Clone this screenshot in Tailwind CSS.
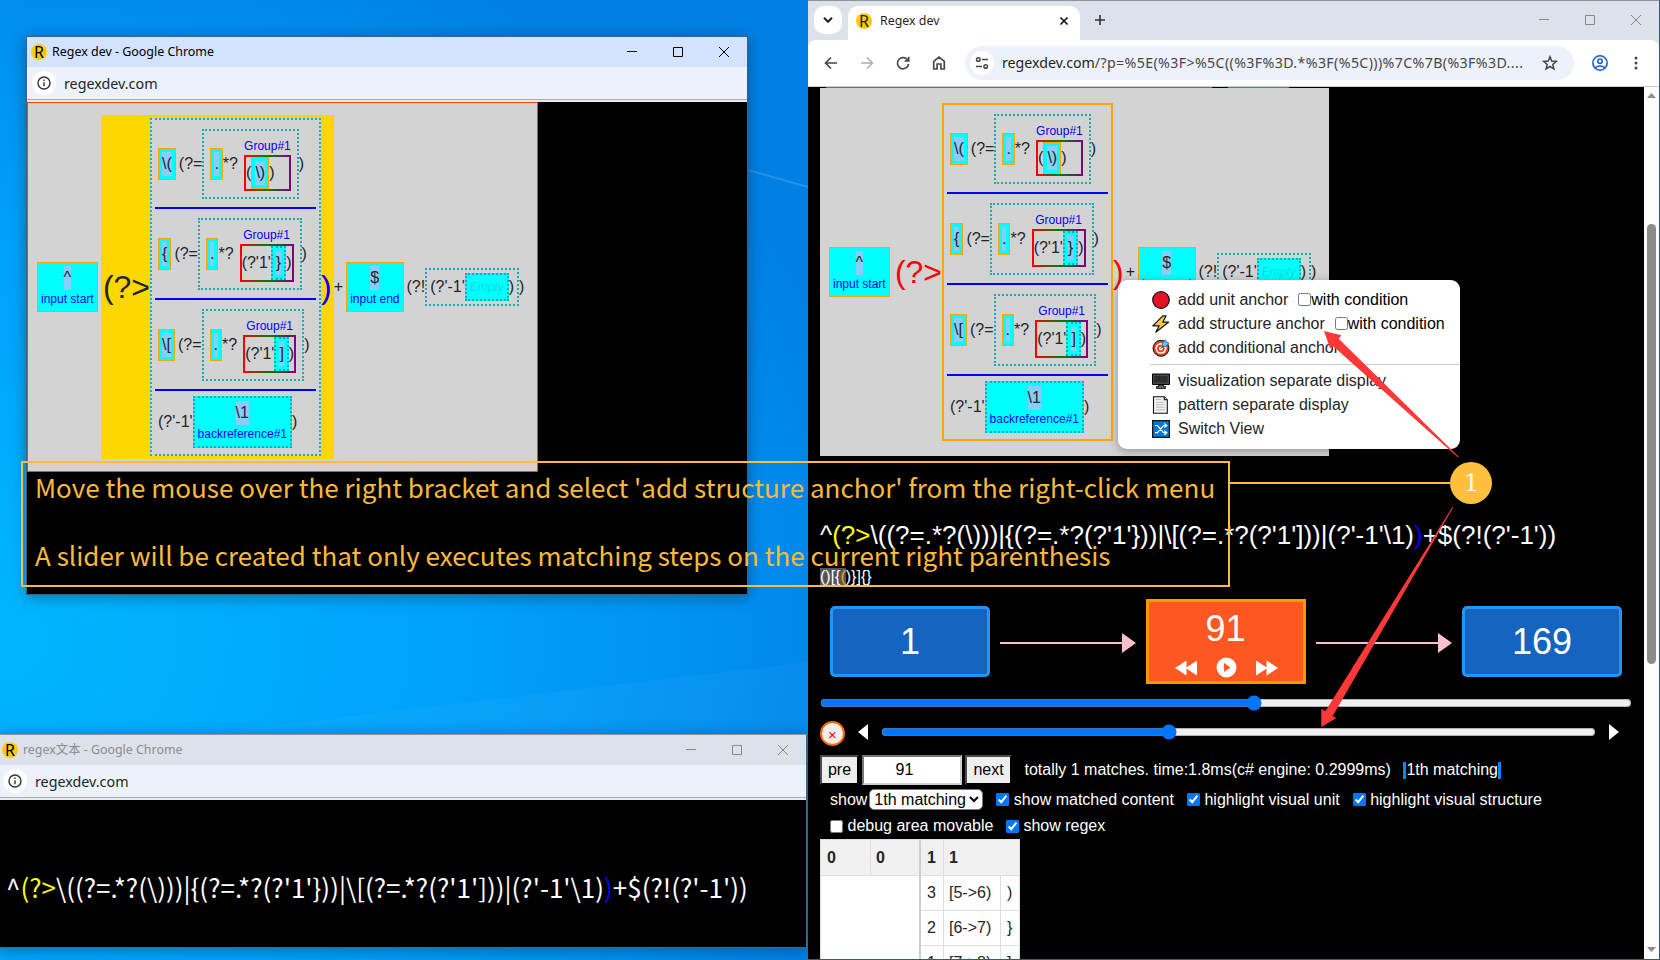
<!DOCTYPE html>
<html lang="en">

<head>
    <meta charset="UTF-8">
    <meta name="viewport" content="width=device-width, initial-scale=1.0">
    <title>Regex dev</title>
    <script src="https://cdn.jsdelivr.net/npm/@tailwindcss/browser@4"></script>
</head>

<body class="relative w-[1660px] h-[960px] overflow-hidden font-['Liberation_Sans',Arial,sans-serif] text-[16px] leading-6 text-[#212529] bg-[radial-gradient(ellipse_900px_760px_at_0px_640px,#00b6ff_0%,#00a2fb_50%,#0090f0_80%,#0080e4_100%)]">

    <!-- wallpaper beams -->
    <svg class="absolute left-0 top-0" width="808" height="960" viewBox="0 0 808 960" fill="#fff">
        <path d="M748 169l60 17v2l-60-17z" fill-opacity=".15"/>
        <path d="M200 734L808 662V734z" fill-opacity=".03"/>
    </svg>

    <!-- visualization window -->
    <div class="absolute left-[26px] top-[36px] w-[722px] h-[559px] flex flex-col border border-[#3f5f80] bg-black shadow-[0_2px_14px_rgba(0,0,0,0.35)]">
        <div class="h-[30px] shrink-0 flex items-center pl-1 bg-[#d3e3fd] text-black">
            <span class="shrink-0 w-4 h-4 rounded-full bg-[#fdcb08] text-[16px] leading-4 text-center font-['Noto_Sans',sans-serif]">R</span>
            <span class="ml-[5px] text-[12.45px] font-['Noto_Sans',sans-serif]">Regex dev - Google Chrome</span>
            <div class="ml-auto mr-[18px] flex gap-9">
                <svg width="10" height="10" viewBox="0 0 10 10" fill="none" stroke="#000"><path d="M0 4.5h10"/></svg>
                <svg width="10" height="10" viewBox="0 0 10 10" fill="none" stroke="#000"><path d="M.5.5h9v9h-9z"/></svg>
                <svg width="10" height="10" viewBox="0 0 10 10" fill="none" stroke="#000"><path d="M0 0l10 10M10 0L0 10"/></svg>
            </div>
        </div>
        <div class="h-8 shrink-0 flex items-center pl-[5px] bg-[#edf1fa]">
            <span class="w-6 h-6 rounded-full bg-white flex items-center justify-center">
                <svg width="14" height="14" viewBox="0 0 14 14" fill="none" stroke="#333" stroke-width="1.4"><circle cx="7" cy="7" r="6"/><path d="M7 6.2v4M7 3.6v1.5"/></svg>
            </span>
            <span class="ml-2 mt-[2px] text-[14.3px] font-['Noto_Sans',sans-serif]">regexdev.com</span>
        </div>
        <div class="h-[3px] shrink-0 border-t border-[#a9adb3] bg-[#e8eaf0]"></div>
        <div id="vis1" class="w-[511px] h-[370px] border border-[#ff4500] bg-[#d3d3d3] flex items-center pl-[6px]"></div>
    </div>

    <!-- pattern window -->
    <div class="absolute left-[-3px] top-[734px] w-[810px] h-[214px] flex flex-col border border-[#3c6d90] border-t-[#8b959e] bg-black shadow-[0_2px_14px_rgba(0,0,0,0.35)]">
        <div class="h-[30px] shrink-0 flex items-center pl-1 bg-[#dde1e9] text-[#8a8d92]">
            <span class="shrink-0 w-4 h-4 rounded-full bg-[#fdcb08] text-black text-[16px] leading-4 text-center font-['Noto_Sans',sans-serif]">R</span>
            <span class="ml-[5px] text-[12.4px] font-['Noto_Sans','Noto_Sans_CJK_SC',sans-serif]">regex文本 - Google Chrome</span>
            <div class="ml-auto mr-[18px] flex gap-9">
                <svg width="10" height="10" viewBox="0 0 10 10" fill="none" stroke="#888"><path d="M0 4.5h10"/></svg>
                <svg width="10" height="10" viewBox="0 0 10 10" fill="none" stroke="#888"><path d="M.5.5h9v9h-9z"/></svg>
                <svg width="10" height="10" viewBox="0 0 10 10" fill="none" stroke="#888"><path d="M0 0l10 10M10 0L0 10"/></svg>
            </div>
        </div>
        <div class="h-8 shrink-0 flex items-center pl-[5px] bg-[#edf1fa]">
            <span class="w-6 h-6 rounded-full bg-white flex items-center justify-center">
                <svg width="14" height="14" viewBox="0 0 14 14" fill="none" stroke="#333" stroke-width="1.4"><circle cx="7" cy="7" r="6"/><path d="M7 6.2v4M7 3.6v1.5"/></svg>
            </span>
            <span class="ml-2 mt-[2px] text-[14.3px] font-['Noto_Sans',sans-serif]">regexdev.com</span>
        </div>
        <div class="h-[3px] shrink-0 border-t border-[#a9adb3] bg-[#e8eaf0]"></div>
        <div class="pt-[67px] pl-[8px] text-[26px] leading-[40px] text-white whitespace-nowrap font-['Noto_Sans_CJK_SC',sans-serif]">^<span class="text-[#ff0]">(?&gt;</span>\((?=.*?(\)))|{(?=.*?(?'1'}))|\[(?=.*?(?'1']))|(?'-1'\1)<span class="text-[#00f]">)</span>+$(?!(?'-1'))</div>
    </div>

    <!-- main browser window -->
    <div class="absolute left-[808px] top-0 w-[852px] h-[960px] flex flex-col border border-l-0 border-[#2f5b8e] border-t-[#8f939a] bg-black">
        <div class="h-[39px] shrink-0 flex items-start pl-[6px] pt-[5px] bg-[#dde1e9]">
            <span class="w-7 h-7 rounded-[10px] bg-white flex items-center justify-center">
                <svg width="10" height="6" viewBox="0 0 10 6" fill="none" stroke="#1f1f1f" stroke-width="2"><path d="M1 .8l4 4 4-4"/></svg>
            </span>
            <div class="ml-[6px] w-[232px] h-[34px] rounded-t-[10px] bg-white flex items-center pl-2 pb-[5px] text-[#1f1f1f]">
                <span class="shrink-0 w-4 h-4 rounded-full bg-[#fdcb08] text-[16px] leading-4 text-center font-['Noto_Sans',sans-serif]">R</span>
                <span class="ml-2 text-[12.4px] font-['Noto_Sans',sans-serif]">Regex dev</span>
                <svg class="ml-auto mr-3" width="8" height="8" viewBox="0 0 8 8" fill="none" stroke="#1f1f1f" stroke-width="1.6"><path d="M.5.5l7 7M7.500.5l-7 7"/></svg>
            </div>
            <svg class="ml-[15px] mt-[9px]" width="10" height="10" viewBox="0 0 10 10" fill="none" stroke="#333" stroke-width="1.6"><path d="M0 5h10M5 0v10"/></svg>
            <div class="ml-auto mr-[18px] mt-[9px] flex gap-9">
                <svg width="10" height="10" viewBox="0 0 10 10" fill="none" stroke="#888"><path d="M0 4.5h10"/></svg>
                <svg width="10" height="10" viewBox="0 0 10 10" fill="none" stroke="#888"><path d="M.5.5h9v9h-9z"/></svg>
                <svg width="10" height="10" viewBox="0 0 10 10" fill="none" stroke="#888"><path d="M0 0l10 10M10 0L0 10"/></svg>
            </div>
        </div>
        <div class="h-[46px] shrink-0 bg-[#dde1e9]">
            <div class="h-full flex items-center pl-[15px] rounded-t-[8px] bg-white text-[#474747]">
                <svg width="16" height="16" viewBox="0 0 16 16" fill="none" stroke="#474747" stroke-width="1.7"><path d="M14 8H3M8 2.500L2.500 8 8 13.500"/></svg>
                <svg class="ml-5" width="16" height="16" viewBox="0 0 16 16" fill="none" stroke="#b0b0b0" stroke-width="1.7"><path d="M2 8h11M8 2.500L13.500 8 8 13.500"/></svg>
                <svg class="ml-5" width="16" height="16" viewBox="0 0 16 16" fill="none" stroke="#474747" stroke-width="1.7"><path d="M13 5.500A5.600 5.600 0 1 0 13.600 9M13.700 1.800V6H9.500"/></svg>
                <svg class="ml-5" width="16" height="16" viewBox="0 0 16 16" fill="none" stroke="#474747" stroke-width="1.7"><path d="M2.700 6.300L8 2l5.300 4.300V14H9.900V9H6.100v5H2.700z"/></svg>
                <div class="ml-[18px] w-[609px] h-[34px] rounded-full bg-[#edf1fa] flex items-center pl-[5px]">
                    <span class="w-6 h-6 rounded-full bg-white flex items-center justify-center">
                        <svg width="14" height="14" viewBox="0 0 14 14" fill="none" stroke="#474747" stroke-width="1.5"><circle cx="3.300" cy="3.500" r="1.800"/><path d="M7 3.500h6M1 10.500h6"/><circle cx="10.700" cy="10.500" r="1.800"/></svg>
                    </span>
                    <span class="ml-2 mb-px text-[14.2px] whitespace-nowrap font-['Noto_Sans',sans-serif]"><span class="text-[#1f1f1f]">regexdev.com</span><span class="tracking-[0.37px]">/?p=%5E(%3F&gt;%5C((%3F%3D.*%3F(%5C)))%7C%7B(%3F%3D....</span></span>
                    <svg class="ml-auto mr-4" width="16" height="16" viewBox="0 0 16 16" fill="none" stroke="#474747" stroke-width="1.500"><path d="M8 1.800l1.700 4.300 4.600.3-3.500 3 1.100 4.500L8 11.500l-3.900 2.400 1.100-4.500-3.500-3 4.600-.3z"/></svg>
                </div>
                <svg class="ml-[18px]" width="16" height="16" viewBox="0 0 16 16" fill="none" stroke="#1558d0" stroke-width="1.500"><circle cx="8" cy="8" r="7.200"/><circle cx="8" cy="6.300" r="2.200"/><path d="M3.200 12.700c2.700-2.400 6.900-2.400 9.600 0"/></svg>
                <svg class="ml-5" width="16" height="16" viewBox="0 0 16 16" fill="#474747"><circle cx="8" cy="3" r="1.500"/><circle cx="8" cy="8" r="1.500"/><circle cx="8" cy="13" r="1.500"/></svg>
            </div>
        </div>
        <div class="h-px shrink-0 bg-[#c9cbd0]"></div>

        <div class="flex-1 min-h-0 flex">
            <div class="w-[836px] overflow-hidden pl-[12px] text-white">
                <div class="h-px flex"><div class="ml-[6px] w-[386px] bg-[#6f6f6f]"></div><div class="ml-4 w-[61px] bg-[#3d7fd0]"></div></div>
                <div id="vis2" class="w-[509px] h-[368px] bg-[#d3d3d3] text-[#212529] flex items-center pl-[6px]"></div>

                <div class="mt-[60px] text-[26px] leading-[39px] whitespace-nowrap">^<span class="text-[#ff0]">(?&gt;</span>\((?=.*?(\)))|{(?=.*?(?'1'}))|\[(?=.*?(?'1']))|(?'-1'\1)<span class="text-[#00f]">)</span>+$(?!(?'-1'))</div>
                <div class="mt-[10px]"><span class="bg-[#555]">()[{<span class="text-[#ffa500]">(</span></span>)}]{}</div>

                <!-- step boxes -->
                <div class="mt-[10px] h-[85px] pl-[10px] flex items-center">
                    <div class="w-[160px] h-[71px] border-[3px] border-[#2196f3] rounded-[5px] bg-[#1565c0] flex items-center justify-center text-[36px]">1</div>
                    <svg class="mx-[10px] mt-[3px]" width="136" height="20" viewBox="0 0 136 20" fill="#ffc0cb"><path d="M0 9h123v2H0zM122 0l14 10-14 10z"/></svg>
                    <div class="w-[160px] h-[85px] border-[3px] border-[#ff9800] bg-[#ff5722] flex flex-col items-center text-[36px]">
                        <div class="mt-[2px] mr-px leading-[50px]">91</div>
                        <div class="mt-[3px] flex items-center">
                            <svg width="22" height="16" viewBox="0 0 22 16" fill="#fff"><path d="M11.500.5v15L0 8zM22 .5v15L10.500 8z"/></svg>
                            <svg class="mx-[19px]" width="21" height="21" viewBox="0 0 21 21"><circle cx="10.500" cy="10.500" r="10" fill="#fff"/><path d="M8 6l6.500 4.500L8 15z" fill="#ff5722"/></svg>
                            <svg width="22" height="16" viewBox="0 0 22 16" fill="#fff"><path d="M0 .5v15L11.500 8zM10.500.5v15L22 8z"/></svg>
                        </div>
                    </div>
                    <svg class="mx-[10px] mt-[3px]" width="136" height="20" viewBox="0 0 136 20" fill="#ffc0cb"><path d="M0 9h123v2H0zM122 0l14 10-14 10z"/></svg>
                    <div class="w-[160px] h-[71px] border-[3px] border-[#2196f3] rounded-[5px] bg-[#1565c0] flex items-center justify-center text-[36px]">169</div>
                </div>

                <input type="range" min="1" max="169" value="91" class="block mt-[11px] w-[812px] h-4">
                <div class="mt-[10px] h-[25px] flex items-center">
                    <button class="w-[25px] h-[25px] rounded-full border-2 border-[#ff6a00] bg-[#efefef] text-[#f00] text-[15px] leading-[22px] pt-px text-center">×</button>
                    <svg class="ml-[13px] mb-[3px]" width="10" height="16" viewBox="0 0 10 16" fill="#fff"><path d="M10 0v16L0 8z"/></svg>
                    <input type="range" min="0" max="100" value="40" class="ml-[13px] mb-[3px] w-[715px] h-4">
                    <svg class="ml-[13px] mb-[3px]" width="10" height="16" viewBox="0 0 10 16" fill="#fff"><path d="M0 0v16l10-8z"/></svg>
                </div>

                <div class="mt-[9px] h-[30px] flex items-center">
                    <button class="w-[39px] h-[30px] border-2 border-black border-t-[#4c4c4c] border-l-[#4c4c4c] bg-[#efefef] text-black">pre</button>
                    <div class="ml-[3px] w-[100px] h-[30px] border-2 border-[#767676] border-b-[#cfcfcf] border-r-[#cfcfcf] bg-white text-black text-center leading-[26px] pr-[15px]">91</div>
                    <button class="ml-[3px] w-[47px] h-[30px] border-2 border-black border-t-[#4c4c4c] border-l-[#4c4c4c] bg-[#efefef] text-black">next</button>
                    <span class="ml-[12.5px]">totally 1 matches. time:1.8ms(c# engine: 0.2999ms)</span>
                    <span class="ml-[12.5px] h-[17px] leading-[16px] border-x-[3px] border-[#0a84ff]">1th matching</span>
                </div>
                <div class="mt-[4px] h-[21px] pl-[10px] flex items-center">
                    <span>show</span>
                    <select class="ml-[2px] w-[114px] h-[21px] rounded-[5px] border border-[#767676] bg-white text-black px-0 py-0"><option>1th matching</option></select>
                    <input type="checkbox" checked class="ml-[13px] w-[13px] h-[13px]"><span class="ml-[4.5px]">show matched content</span>
                    <input type="checkbox" checked class="ml-[13px] w-[13px] h-[13px]"><span class="ml-[4.5px]">highlight visual unit</span>
                    <input type="checkbox" checked class="ml-[13px] w-[13px] h-[13px]"><span class="ml-[4.5px]">highlight visual structure</span>
                </div>
                <div class="mt-[4px] h-[24px] pl-[10px] flex items-center">
                    <input type="checkbox" class="w-[13px] h-[13px]"><span class="ml-[4.5px]">debug area movable</span>
                    <input type="checkbox" checked class="ml-[12.5px] w-[13px] h-[13px]"><span class="ml-[4.5px]">show regex</span>
                </div>

                <!-- captures -->
                <div class="mt-[1px] w-[200px] h-[180px] border border-[#ddd] bg-white text-[#212529] flex items-start">
                    <div class="w-[98px] h-[36px] flex bg-[#f1f1f1] border-b border-[#ddd] font-bold leading-[35px]">
                        <div class="w-[50px] pl-[6px] border-r border-[#ddd]">0</div>
                        <div class="pl-[5px]">0</div>
                    </div>
                    <div class="w-[100px] border-l-2 border-[#ccc] grid grid-cols-[23px_57px_18px] leading-[34px]">
                        <div class="h-[36px] pl-[6px] pt-px border-r border-b border-[#ddd] bg-[#f1f1f1] font-bold">1</div>
                        <div class="h-[36px] pl-[5px] pt-px border-b border-[#ddd] bg-[#f1f1f1] font-bold col-span-2">1</div>
                        <div class="h-[35px] pl-[6px] border-r border-b border-[#ddd]">3</div>
                        <div class="h-[35px] pl-[5px] border-r border-b border-[#ddd]">[5-&gt;6)</div>
                        <div class="h-[35px] pl-[6px] border-b border-[#ddd]">)</div>
                        <div class="h-[35px] pl-[6px] border-r border-b border-[#ddd]">2</div>
                        <div class="h-[35px] pl-[5px] border-r border-b border-[#ddd]">[6-&gt;7)</div>
                        <div class="h-[35px] pl-[6px] border-b border-[#ddd]">}</div>
                        <div class="h-[35px] pl-[6px] border-r border-b border-[#ddd]">1</div>
                        <div class="h-[35px] pl-[5px] border-r border-b border-[#ddd]">[7-&gt;8)</div>
                        <div class="h-[35px] pl-[6px] border-b border-[#ddd]">]</div>
                    </div>
                </div>
            </div>
            <!-- scrollbar -->
            <div class="w-[15px] flex flex-col items-center bg-[#fcfcfc] pt-[6px] pb-[7px]">
                <svg width="9" height="5" viewBox="0 0 9 5" fill="#8b8b8b"><path d="M4.500 0L9 5H0z"/></svg>
                <div class="mt-[126px] w-[9px] h-[440px] rounded-full bg-[#8b8b8b]"></div>
                <svg class="mt-auto" width="9" height="5" viewBox="0 0 9 5" fill="#8b8b8b"><path d="M4.500 5L9 0H0z"/></svg>
            </div>
        </div>
    </div>

    <!-- context menu -->
    <div class="absolute left-[1118px] top-[280px] w-[342px] h-[169px] rounded-[9px] bg-white pt-[8px] shadow-[0_2px_10px_rgba(0,0,0,0.3)]">
        <div class="h-6 pl-[34px] flex items-center">
            <svg width="18" height="18" viewBox="0 0 18 18"><circle cx="9" cy="9" r="8.300" fill="#e81224" stroke="#111" stroke-width="1.200"/></svg>
            <span class="ml-2">add unit anchor</span>
            <input type="checkbox" class="ml-[10px] mb-[2px] w-[13px] h-[13px]"><span class="text-black">with condition</span>
        </div>
        <div class="h-6 pl-[34px] flex items-center">
            <svg width="18" height="18" viewBox="0 0 18 18"><path d="M10.800.8L.8 10.800h6.400L3.800 17.200 16.500 7.200h-5.700L14 .8z" fill="#ffc83d" stroke="#111" stroke-width="1.200" stroke-linejoin="round"/></svg>
            <span class="ml-2">add structure anchor</span>
            <input type="checkbox" class="ml-[10px] mb-[2px] w-[13px] h-[13px]"><span class="text-black">with condition</span>
        </div>
        <div class="h-6 pl-[34px] flex items-center">
            <svg width="18" height="18" viewBox="0 0 18 18"><circle cx="9" cy="9.300" r="8" fill="#f03a17" stroke="#111"/><circle cx="9" cy="9.300" r="5.500" fill="#fff"/><circle cx="8.800" cy="9.500" r="3.800" fill="#f03a17"/><circle cx="8.800" cy="9.500" r="1.900" fill="#fff"/><path d="M8.800 9.500l4-4" stroke="#111"/><path d="M10.500 7.500V4l3-3.200 1 2.200 2.500 1-3 3.500z" fill="#50c8f5" stroke="#17607e" stroke-width=".7"/></svg>
            <span class="ml-2">add conditional anchor</span>
        </div>
        <div class="ml-8 my-[4px] h-px bg-[#ccc]"></div>
        <div class="h-6 pl-[34px] flex items-center">
            <svg width="18" height="16" viewBox="0 0 18 16"><path d="M.5 1h17v10.500H.5z" fill="#222" stroke="#000"/><path d="M1.700 2.200h14.600v8H1.700z" fill="#2b2b2b" stroke="#777" stroke-width=".6"/><path d="M6.500 12h5v1.500h2v2h-9v-2h2z" fill="#666" stroke="#000" stroke-width=".8"/></svg>
            <span class="ml-2">visualization separate display</span>
        </div>
        <div class="h-6 pl-[34px] flex items-center">
            <svg width="18" height="18" viewBox="0 0 18 18" stroke="#111" stroke-width="1.100"><path d="M1.500.7h10.800l3 3v13.600H1.500z" fill="#f2f2f2"/><path d="M12.300.7v3h3" fill="#ccc"/><path d="M4 3.500h5.500M4 6.200h8.500M4 8.700h8.500M4 11.200h8.500M4 13.700h8.500" stroke="#bbb"/></svg>
            <span class="ml-2">pattern separate display</span>
        </div>
        <div class="h-6 pl-[34px] flex items-center">
            <svg width="18" height="18" viewBox="0 0 18 18" fill="none"><path d="M.6.6h16.800v16.800H.6z" fill="#0078d7" stroke="#111" stroke-width="1.200"/><path d="M3 5.500h2.500l6 7.200H14M3 12.700h2.500l6-7.200H14" stroke="#fff" stroke-width="1.200"/><path d="M12.300 3.500l2.500 2-2.500 2M12.300 10.700l2.500 2-2.500 2" stroke="#fff" stroke-width="1.200"/></svg>
            <span class="ml-2">Switch View</span>
        </div>
    </div>

    <!-- callout -->
    <div class="absolute left-[21px] top-[461px] w-[1209px] h-[126px] border-2 border-[#fcbd3c] pl-[12px] pt-[7px] text-[26px] leading-[34px] text-[#f9b93b] whitespace-nowrap font-['Noto_Sans_CJK_SC',sans-serif]">
        <p>Move the mouse over the right bracket and select 'add structure anchor' from the right-click menu</p>
        <p class="mt-[34px]">A slider will be created that only executes matching steps on the current right parenthesis</p>
    </div>
    <div class="absolute left-[1229px] top-[482px] w-[224px] h-[2px] bg-[#fcbd3c]"></div>
    <div class="absolute left-[1450px] top-[462px] w-[42px] h-[42px] rounded-full bg-[#ffc03d] text-white text-[27px] leading-[40px] text-center font-['Liberation_Serif',serif]">1</div>
    <svg class="absolute left-0 top-0" width="1660" height="960" viewBox="0 0 1660 960" fill="#fd3838">
        <path d="M1324 331l17.300 4.300-2.600 3.400 120 118-1 .6-124.200-110.800-3.500 1.800z"/>
        <path d="M1321.300 727l0-18 4.200 2 127.100-204.300.8.300-120.700 209 3.600 2z"/>
    </svg>

    <script>
        // single matched token with an orange frame
        function unit(text) {
            return `<span class="border border-[#ffa500] bg-[#0ff] p-[3px] flex"><span class="bg-[#87cefa]">${text}</span></span>`;
        }

        // framed token with a caption under it
        function captioned(text, label, frame) {
            return `<span class="${frame} bg-[#0ff] p-[3px] flex flex-col items-center"><span class="bg-[#87cefa]">${text}</span><span class="text-[12px] leading-[18px] text-[#00f]">${label}</span></span>`;
        }

        function group(body) {
            return `<span class="ml-[6.1px] flex flex-col items-center"><span class="text-[12px] leading-[18px] text-[#00f]">Group#1</span>
                <span class="min-w-full border-2 border-transparent flex items-center [border-image:linear-gradient(to_right,red,green,purple)_1]">${body}</span></span>`;
        }

        function dotted(text) {
            return `<span class="border-2 border-dotted border-[#12aeb4] bg-[#0ff] p-[3px] flex"><span class="bg-[#87cefa]">${text}</span></span>`;
        }

        function row(token, body) {
            return `<div class="pt-[9px] pb-2 pl-[3px] border-b-2 border-[#00f] flex items-center">${unit(token)}<span class="ml-[3px]">(?=</span>
                <span class="border-2 border-dotted border-[#12aeb4] p-[6px] flex items-center">${unit('.')}<span>*?</span>${group(body)}</span><span>)</span></div>`;
        }

        function diagram(wrap, open, close, box) {
            return `<span class="mx-[3px]">${captioned('^', 'input start', 'border border-[#ffa500]')}</span>
                <div class="${wrap} pl-[2.2px] pr-[2.1px] py-[3px] flex items-center">
                    <span class="${open} text-[32px] leading-[48px]">(?&gt;</span>
                    <div class="${box} w-[171px] h-[338px] px-[3px] bg-[#d3d3d3]">
                        ${row('\\(', `<span>(</span>${unit('\\)')}<span>)</span>`)}
                        ${row('{', `<span>(?'1'</span>${dotted('}')}<span>)</span>`)}
                        ${row('\\[', `<span>(?'1'</span>${dotted(']')}<span>)</span>`)}
                        <div class="pt-[5px] pl-[3px] flex items-center"><span>(?'-1'</span>${captioned('\\1', 'backreference#1', 'border-2 border-dotted border-[#12aeb4]')}<span>)</span></div>
                    </div>
                    <span class="${close} text-[32px] leading-[48px]">)</span>
                </div>
                <span>+</span>
                <span class="mx-[3px]">${captioned('$', 'input end', 'border border-[#ffa500]')}</span>
                <span>(?!</span>
                <span class="border-2 border-dotted border-[#12aeb4] p-[3px] flex items-center"><span>(?'-1'</span>
                    <span class="border-2 border-dotted border-[#12aeb4] bg-[#0ff] p-[3px] text-[12px] leading-[18px] italic text-[#00dede]">Empty</span><span>)</span></span>
                <span>)</span>`;
        }

        document.getElementById('vis1').innerHTML = diagram('bg-[#ffd700]', 'text-[#212529]', 'text-[#00f]', 'border-2 border-dotted border-[#12aeb4]');
        document.getElementById('vis2').innerHTML = diagram('bg-transparent', 'text-[#f00]', 'text-[#f00]', 'border-2 border-[#ffa500]');
    </script>

</body>

</html>
